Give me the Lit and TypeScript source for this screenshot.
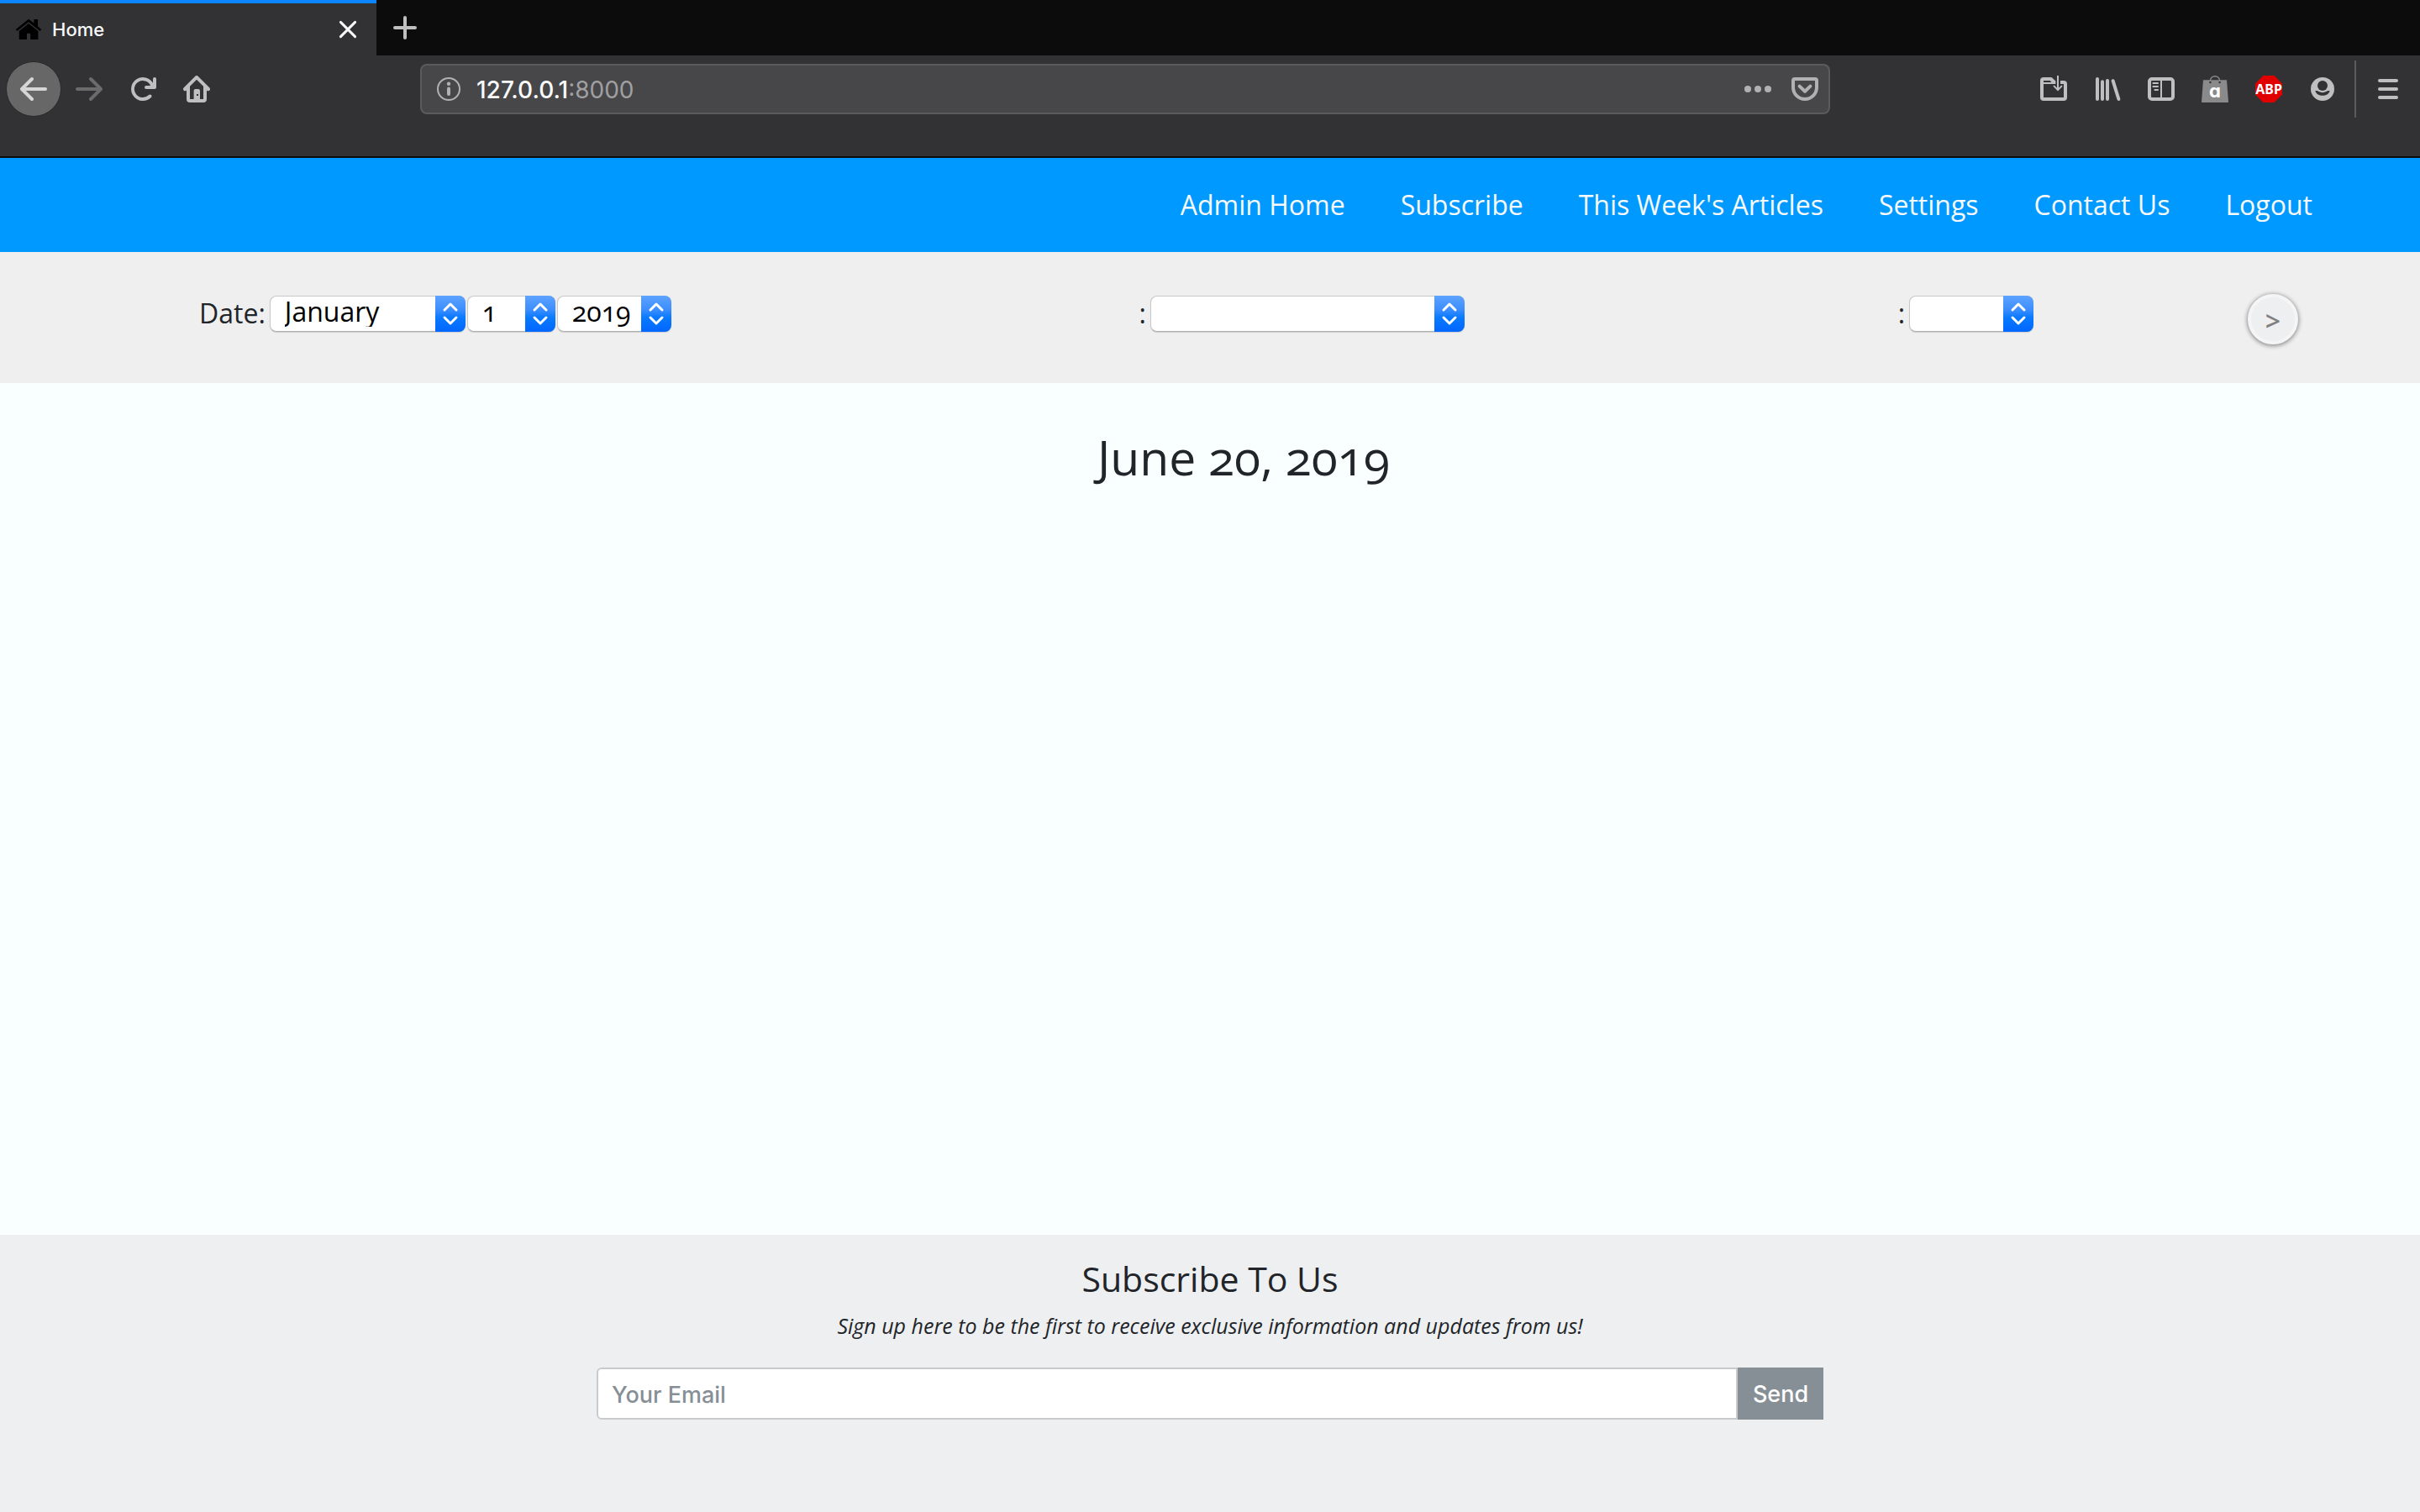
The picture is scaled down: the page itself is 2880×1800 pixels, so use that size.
import { LitElement, html, css, svg } from "lit";
import { customElement, property } from "lit/decorators.js";

const icons = {
  favicon: svg`<path d="M8 1.9 0.4 8l.8 1L8 3.6 14.8 9l.8-1-2.1-1.7V2h-2.3v2.3zM8 4.5 2.4 9v5H7v-3.6h2.1V14h4.6V9z"/>`,
  close: svg`<path d="M3.7 3.7l8.6 8.6M12.3 3.7l-8.6 8.6" fill="none" stroke="currentColor" stroke-width="1.5" stroke-linecap="round"/>`,
  plus: svg`<path d="M8 2v12M2 8h12" fill="none" stroke="currentColor" stroke-width="2" stroke-linecap="round"/>`,
  back: svg`<path d="M15 7H3.414l4.293-4.293a1 1 0 0 0-1.414-1.414l-6 6a1 1 0 0 0 0 1.414l6 6a1 1 0 0 0 1.414-1.414L3.414 9H15a1 1 0 0 0 0-2z"/>`,
  forward: svg`<path d="M1 7h11.586L8.293 2.707a1 1 0 0 1 1.414-1.414l6 6a1 1 0 0 1 0 1.414l-6 6a1 1 0 0 1-1.414-1.414L12.586 9H1a1 1 0 0 1 0-2z"/>`,
  reload: svg`<path d="M15 1a1 1 0 0 0-1 1v2.418A6.995 6.995 0 1 0 8 15a6.954 6.954 0 0 0 4.95-2.05 1 1 0 0 0-1.414-1.414A5.019 5.019 0 1 1 12.549 6H10a1 1 0 0 0 0 2h5a1 1 0 0 0 1-1V2a1 1 0 0 0-1-1z"/>`,
  home: svg`<path fill-rule="evenodd" d="M15.707 7.293l-7-7a1 1 0 0 0-1.414 0l-7 7A1 1 0 0 0 2 8.7V14a2 2 0 0 0 2 2h8a2 2 0 0 0 2-2V8.7a1 1 0 0 0 1.707-1.407zM12 14h-2V9a1 1 0 0 0-1-1H7.300a1 1 0 0 0-1 1v5H4V6.414l4-4 4 4zM8 11h1v1H8z"/>`,
  info: svg`<circle cx="8" cy="8" r="6.500" fill="none" stroke="currentColor"/><circle cx="8" cy="4.900" r="1.100"/><rect x="7" y="6.800" width="2" height="5.200" rx="1"/>`,
  dots: svg`<circle cx="2" cy="8" r="2"/><circle cx="8" cy="8" r="2"/><circle cx="14" cy="8" r="2"/>`,
  pocket: svg`<path d="M2 2h12a1 1 0 0 1 1 1v4A7 7 0 0 1 1 7V3a1 1 0 0 1 1-1zM4.800 6.300 8 9.400l3.200-3.100" fill="none" stroke="currentColor" stroke-width="2" stroke-linecap="round" stroke-linejoin="round"/>`,
  save: svg`<path d="M2 1a2 2 0 0 0-2 2v10a2 2 0 0 0 2 2h12a2 2 0 0 0 2-2V5a2 2 0 0 0-2-2h-2v2h2v8H2V5h5.200L9.200 5V3.200L7.600 1.700A2 2 0 0 0 6 1zM2 3h3.800l1 1H2z" fill-rule="evenodd"/><path d="M10.500 0v8.300M8.300 6.300l2.200 2.200 2.200-2.200" fill="none" stroke="currentColor" stroke-linecap="round"/>`,
  library: svg`<path d="M2 2v12M5 3.600V14M8 3v11M11.300 3.100 14.700 14" fill="none" stroke="currentColor" stroke-width="2" stroke-linecap="round"/>`,
  sidebar: svg`<rect x="1" y="2" width="14" height="12" rx="1.500" fill="none" stroke="currentColor" stroke-width="2"/><path d="M8 2v12M3.200 4.500H6M3.200 6.500H6M4.200 8.500H6" fill="none" stroke="currentColor" stroke-linecap="round"/>`,
  bag: svg`<path d="M1 2.600h14l1 13a.4.4 0 0 1-.4.400H.4a.4.400 0 0 1-.4-.4z" fill="#8a8a8b"/><path d="M5.200 3.800V3a2.800 2.600 0 0 1 5.600 0v.8" fill="none" stroke="#8a8a8b" stroke-width=".7"/><circle cx="5.200" cy="4" r=".6" fill="#323234"/><circle cx="10.800" cy="4" r=".6" fill="#323234"/><text class="bag-mark" x="8" y="13" text-anchor="middle">a</text>`,
  abp: svg`<path d="M4.700 0h6.600L16 4.700v6.600L11.300 16H4.700L0 11.300V4.700z" fill="#e10000"/><text class="abp-mark" x="8" y="11" text-anchor="middle">ABP</text>`,
  account: svg`<circle cx="8" cy="8" r="7"/><circle cx="8" cy="6" r="3" fill="#323234"/><path d="M3.700 9.200c1.200-.6 2.200.9 4.300.9s3.100-1.500 4.300-.9c-.6 1.700-2.300 2.700-4.300 2.700s-3.700-1-4.300-2.700z" fill="#323234"/>`,
  menu: svg`<path d="M3 3h10M3 8h10M3 13h10" fill="none" stroke="currentColor" stroke-width="2" stroke-linecap="round"/>`,
};

const icon = (name: keyof typeof icons) =>
  html`<svg class="icon" viewBox="0 0 16 16" aria-hidden="true">${icons[name]}</svg>`;

const iconStyles = css`
  * { box-sizing: border-box; }
  .icon { display: block; width: 32px; height: 32px; fill: currentColor; flex: none; }
  .bag-mark { font: 700 11px Inter, sans-serif; font-feature-settings: "cv11"; fill: #fff; }
  .abp-mark { font: 700 8px "Liberation Sans Narrow", "Noto Sans", sans-serif; fill: #fff; }
  button { border: 0; padding: 0; margin: 0; background: none; color: inherit; font: inherit; }
`;

@customElement("browser-chrome")
class BrowserChrome extends LitElement {
  static styles = [iconStyles, css`
    :host { display: block; background: #323234; color: #bfbfc0; font-family: Inter, "Liberation Sans", sans-serif; border-bottom: 2px solid #0c0c0d; }
    .tabs { display: flex; background: #0c0c0d; height: 66px; }
    .tab { display: flex; align-items: center; width: 448px; padding: 0 18px; gap: 12px; background: #323234; border-top: 4px solid #0a84ff; color: #f9f9fa; font-size: 22px; font-weight: 500; }
    .tab .name { flex: 1; }
    .favicon { color: #000; }
    .new-tab { width: 68px; display: grid; place-items: center; }
    .toolbar { display: flex; align-items: center; height: 80px; margin-bottom: 40px; }
    .nav { display: flex; align-items: center; gap: 32px; padding-left: 7px; width: 500px; flex: none; }
    .back { width: 66px; height: 66px; margin-right: -15px; display: grid; place-items: center; border-radius: 50%; background: #676768; border: 1px solid #29292a; color: #d6d6d6; }
    .dim { color: #6b6b6c; }
    .address { flex: 1; min-width: 0; display: flex; align-items: center; height: 60px; padding: 0 12px 0 16px; border: 2px solid #5b5b5d; border-radius: 8px; background: #474749; color: #b1b1b3; }
    .url { flex: 1; font-size: 28px; line-height: 36px; padding: 2px 0 0 17px; color: #a0a0a2; }
    .host { color: #f9f9fa; font-weight: 500; }
    .address button + button { margin-left: 24px; }
    .tools { display: flex; align-items: center; flex: none; gap: 32px; padding: 0 22px 0 250px; }
    .menu { border-left: 2px solid #5b5b5d; padding: 18px 0 18px 22px; margin-left: -10px; }
  `];

  render() {
    return html`
      <div class="tabs">
        <div class="tab">
          <span class="favicon">${icon("favicon")}</span><span class="name">Home</span>
          <button aria-label="Close tab">${icon("close")}</button>
        </div>
        <button class="new-tab" aria-label="New tab">${icon("plus")}</button>
      </div>
      <div class="toolbar">
        <div class="nav">
          <button class="back" aria-label="Back">${icon("back")}</button>
          <button class="dim" aria-label="Forward">${icon("forward")}</button>
          <button aria-label="Reload">${icon("reload")}</button>
          <button aria-label="Home">${icon("home")}</button>
        </div>
        <div class="address">
          ${icon("info")}
          <span class="url"><span class="host">127.0.0.1</span>:8000</span>
          <button aria-label="Page actions">${icon("dots")}</button>
          <button aria-label="Save to Pocket">${icon("pocket")}</button>
        </div>
        <div class="tools">
          <button aria-label="Downloads">${icon("save")}</button>
          <button aria-label="Library">${icon("library")}</button>
          <button aria-label="Sidebars">${icon("sidebar")}</button>
          <button aria-label="Shopping assistant">${icon("bag")}</button>
          <button aria-label="Adblock Plus">${icon("abp")}</button>
          <button aria-label="Account">${icon("account")}</button>
          <button class="menu" aria-label="Menu">${icon("menu")}</button>
        </div>
      </div>`;
  }
}

@customElement("stepper-select")
class StepperSelect extends LitElement {
  @property() label = "";
  @property({ type: Array }) options: string[] = [];

  static styles = css`
    :host { display: inline-grid; height: 43px; }
    select, .cap { grid-area: 1 / 1; }
    select { appearance: none; box-sizing: border-box; width: 100%; height: 43px; margin: 0; padding: 0 48px 4px 17px; border: 1px solid #c8c8c8; border-bottom-color: #b0b0b0; border-radius: 8px; background: #fff; box-shadow: 0 1px 1px rgba(0, 0, 0, 0.15); color: #000; font: inherit; line-height: 36px; font-variant-numeric: oldstyle-nums; }
    .cap { justify-self: end; width: 36px; height: 43px; border-radius: 0 8px 8px 0; background: linear-gradient(#5ea3ff, #3a8dff 40%, #0a7aff 60%, #0066ff); pointer-events: none; }
    svg { display: block; width: 36px; height: 43px; }
  `;

  render() {
    return html`
      <select aria-label=${this.label}>${this.options.map((o) => html`<option>${o}</option>`)}</select>
      <span class="cap"><svg viewBox="0 0 36 43" fill="none" stroke="#fff" stroke-width="3" stroke-linecap="round" stroke-linejoin="round" aria-hidden="true"><path d="M11 17l7-7 7 7M11 26l7 7 7-7"/></svg></span>`;
  }
}

@customElement("app-root")
class AppRoot extends LitElement {
  static styles = [iconStyles, css`
    :host { display: flex; flex-direction: column; min-height: 100vh; background: #f9fffe; color: #212529; font-family: "Open Sans", Lato, sans-serif; font-size: 32px; font-variant-numeric: oldstyle-nums; line-height: 48px; }
    .links { display: flex; justify-content: flex-end; align-items: center; gap: 66px; height: 112px; padding: 0 128px; background: #0099ff; }
    .links a { color: #f8f9fa; text-decoration: none; }
    .filters { display: grid; grid-template-columns: 1118fr 903fr 416fr 60px; align-items: center; height: 156px; padding: 0 145px 10px 237px; background: #efefef; }
    .field { display: flex; align-items: center; gap: 2px; }
    .field .label { margin-right: 3px; }
    .month { width: 233px; }
    .day { width: 105px; }
    .year { width: 136px; }
    .topic { width: 374px; }
    .kind { width: 148px; }
    .go { width: 60px; height: 60px; margin-top: 14px; border: 4px solid #f5f5f5; border-radius: 50%; background: #eeeff1; box-shadow: 0 1px 5px 1px rgba(0, 0, 0, 0.4); color: #808080; font: 600 32px/48px "Open Sans", sans-serif; padding-top: 4px; }
    main { flex: 1; padding: 54px 0 0 80px; }
    h1 { margin: 0; text-align: center; font-size: 57px; line-height: 68px; font-weight: 400; }
    footer { height: 330px; padding-top: 28px; display: flex; flex-direction: column; align-items: center; background: #eeeff1; }
    h2 { margin: 0; font-size: 41px; line-height: 48px; font-weight: 500; }
    .note { margin: 14px 0 0; font-size: 25px; line-height: 36px; font-style: italic; }
    form { display: flex; width: 1460px; max-width: 100%; margin: 32px 0 0; font-family: Inter, "Liberation Sans", sans-serif; font-size: 27px; font-weight: 500; }
    input { flex: 1; min-width: 0; height: 62px; padding: 2px 16px 0; border: 2px solid #c9cacc; border-radius: 6px 0 0 6px; background: #fff; color: #495057; font: inherit; }
    input::placeholder { color: #868e96; opacity: 1; }
    .send { width: 102px; height: 62px; padding-top: 2px; background: #868e96; color: #fff; }
  `];

  private links = ["Admin Home", "Subscribe", "This Week's Articles", "Settings", "Contact Us", "Logout"];
  private months = ["January", "February", "March", "April", "May", "June", "July", "August", "September", "October", "November", "December"];
  private days = Array.from({ length: 31 }, (_, i) => String(i + 1));

  render() {
    return html`
      <browser-chrome></browser-chrome>
      <nav class="links">${this.links.map((l) => html`<a href="#">${l}</a>`)}</nav>
      <div class="filters">
        <div class="field">
          <span class="label">Date:</span>
          <stepper-select class="month" label="Month" .options=${this.months}></stepper-select>
          <stepper-select class="day" label="Day" .options=${this.days}></stepper-select>
          <stepper-select class="year" label="Year" .options=${["2019", "2020", "2021"]}></stepper-select>
        </div>
        <div class="field"><span class="label">:</span><stepper-select class="topic" label="Topic"></stepper-select></div>
        <div class="field"><span class="label">:</span><stepper-select class="kind" label="Kind"></stepper-select></div>
        <button class="go" aria-label="Apply">&gt;</button>
      </div>
      <main><h1>June 20, 2019</h1></main>
      <footer>
        <h2>Subscribe To Us</h2>
        <p class="note">Sign up here to be the first to receive exclusive information and updates from us!</p>
        <form @submit=${(e: Event) => e.preventDefault()}>
          <input type="email" placeholder="Your Email" aria-label="Your Email" />
          <button class="send">Send</button>
        </form>
      </footer>`;
  }
}
